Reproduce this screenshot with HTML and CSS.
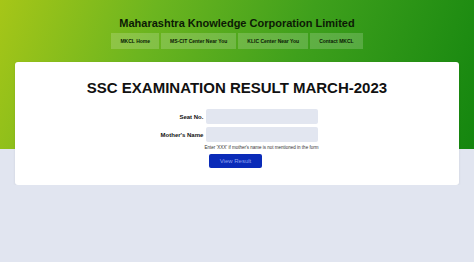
FILE: index.html
```html
<!DOCTYPE html>
<html lang="en">
<head>
    <meta charset="UTF-8">
    <meta name="viewport" content="width=device-width, initial-scale=1.0">
    <title>SSC Examination Result March-2023</title>
    <link rel="stylesheet" href="styles.css">
</head>
<body>

<div id="header">
    <h1>Maharashtra Knowledge Corporation Limited</h1>
    <div class="nav">
        <a href="#">MKCL Home</a>
        <a href="#">MS-CIT Center Near You</a>
        <a href="#">KLIC Center Near You</a>
        <a href="#">Contact MKCL</a>
    </div>
</div>

<div id="container">
    <h2>SSC EXAMINATION RESULT MARCH-2023</h2>

    <form class="result-form">
        <label for="seatNo">Seat No.</label>
        <input type="text" id="seatNo" name="seatNo">

        <label for="motherName">Mother's Name</label>
        <input type="text" id="motherName" name="motherName">

        <p class="hint">Enter 'XXX' if mother's name is not mentioned in the form</p>

        <button type="button" class="btn">View Result</button>
    </form>
</div>

</body>
</html>
```

FILE: styles.css
```css
body {
    margin: 0;
    background-color: #e1e5f0;
    font-family: "Liberation Sans", Arial, sans-serif;
    color: #111;
}
#header {
    height: 149px;
    background: linear-gradient(110deg, #a6c618 0%, #6cb51f 30%, #3fa01c 60%, #14860f 100%);
    padding-top: 17px;
    box-sizing: border-box;
}
h1 {
    font-size: 11px;
    text-align: center;
    margin: 0 0 4px 0;
    color: #0c1a05;
}
.nav {
    display: flex;
    justify-content: center;
    gap: 2px;
}
.nav a {
    display: block;
    height: 16px;
    line-height: 16px;
    padding: 0 9px;
    font-size: 5px;
    font-weight: bold;
    color: #0a1a05;
    text-decoration: none;
    background-color: rgba(255, 255, 255, 0.18);
}
#container {
    background-color: white;
    margin: -87px 15px 0 15px;
    padding: 17px 0 17px 0;
    border-radius: 3px;
    box-shadow: 0 1px 3px rgba(0, 0, 0, 0.08);
    text-align: center;
}
h2 {
    font-size: 15px;
    margin: 0 0 13px 0;
    color: #111;
}
.result-form {
    display: grid;
    grid-template-columns: auto 112px;
    justify-content: center;
    column-gap: 3px;
    row-gap: 3px;
    align-items: center;
    margin-left: 5px;
}
.result-form label {
    font-size: 6px;
    font-weight: bold;
    text-align: right;
}
.result-form input {
    height: 15px;
    box-sizing: border-box;
    border: 0;
    border-radius: 2px;
    background-color: #e2e6f0;
}
.hint {
    grid-column: 1 / 3;
    text-align: right;
    font-size: 4.5px;
    color: #333;
    margin: 0 0 1px 0;
}
.btn {
    grid-column: 1 / 3;
    justify-self: center;
    width: 53px;
    height: 14px;
    margin-left: -8px;
    border: 0;
    border-radius: 2px;
    background-color: #0a2bb8;
    color: #8fa3ef;
    font-family: "Liberation Sans", Arial, sans-serif;
    font-size: 6px;
}
```
